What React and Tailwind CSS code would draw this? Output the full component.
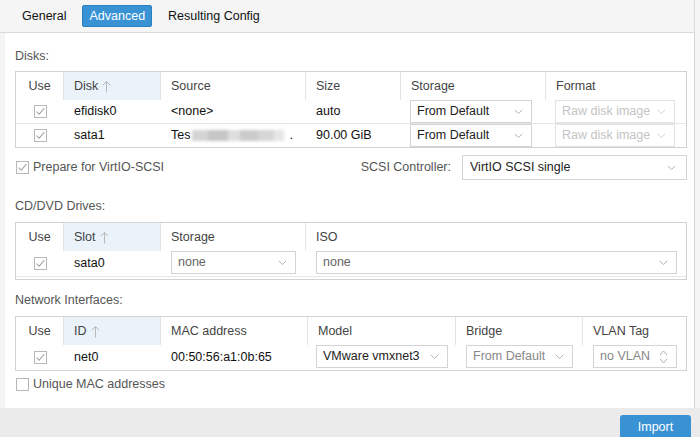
import React from "react";

const font = { fontFamily: '"Liberation Sans", Arial, sans-serif' };

function Chevron({ color = "#b0b0b0" }) {
  return (
    <svg width="9" height="6" viewBox="0 0 9 6" className="shrink-0">
      <path d="M0.8 0.8 L4.5 4.6 L8.2 0.8" fill="none" stroke={color} strokeWidth="1" />
    </svg>
  );
}

function Spinner() {
  return (
    <svg width="9" height="16" viewBox="0 0 9 16" className="shrink-0">
      <path d="M1 6 L4.5 2 L8 6" fill="none" stroke="#b0b0b0" strokeWidth="1" />
      <path d="M1 10 L4.5 14 L8 10" fill="none" stroke="#b0b0b0" strokeWidth="1" />
    </svg>
  );
}

function SortArrow() {
  return (
    <svg width="9" height="13" viewBox="0 0 9 13" className="ml-[4px] shrink-0">
      <path d="M4.5 1.5 L4.5 12.5 M0.8 5.2 L4.5 1.5 L8.2 5.2" fill="none" stroke="#b8b8b8" strokeWidth="1" />
    </svg>
  );
}

function Check({ checked = true }) {
  return (
    <svg width="13" height="13" viewBox="0 0 13 13" className="shrink-0">
      <rect x="0.5" y="0.5" width="12" height="12" fill="#fff" stroke="#b8b8b8" />
      {checked && <path d="M2.6 6.6 L5.2 9.2 L10.4 3.2" fill="none" stroke="#a8a8a8" strokeWidth="1.1" />}
    </svg>
  );
}

function Combo({ text, disabled = false, className = "", h = "h-[23px]", spinner = false, textClass = "" }) {
  return (
    <div
      className={`flex items-center justify-between bg-white border ${
        disabled ? "border-[#e2e2e2] text-[#c4c4c4]" : "border-[#d4d4d4] text-[#222]"
      } ${h} pl-[6px] pr-[8px] text-[12.5px] overflow-hidden ${className}`}
    >
      <span className={`whitespace-nowrap overflow-hidden ${textClass}`}>{text}</span>
      {spinner ? <Spinner /> : <Chevron color={disabled ? "#d4d4d4" : "#b4b4b4"} />}
    </div>
  );
}

function HeadCell({ children, sorted = false, last = false, center = false }) {
  return (
    <div
      className={`h-[28px] flex items-center text-[12.5px] text-[#444] ${
        center ? "justify-center" : "pl-[10px]"
      } ${sorted ? "bg-[#eaf2fa]" : "bg-white"} ${last ? "" : "border-r border-[#e4e4e4]"}`}
    >
      {children}
      {sorted && <SortArrow />}
    </div>
  );
}

function Cell({ children, className = "", center = false }) {
  return (
    <div className={`flex items-center text-[12.5px] text-[#111] ${center ? "justify-center" : "pl-[10px]"} ${className}`}>
      {children}
    </div>
  );
}

function Label({ children, className = "" }) {
  return <div className={`h-[16px] leading-[16px] text-[12.5px] text-[#555] ${className}`}>{children}</div>;
}

export default function App() {
  return (
    <div style={font} className="w-[700px] h-[437px] overflow-hidden bg-[#f5f5f5] flex flex-col">
      {/* Tab bar */}
      <div className="h-[33px] flex items-center border-b border-[#dadada] bg-[#f5f5f5] text-[12.5px] text-[#111] pl-[22px] shrink-0 w-[695px] border-r">
        <span>General</span>
        <span className="ml-[16px] h-[22px] px-[6px] flex items-center bg-[#3892d4] border border-[#2a7fc0] text-white rounded-[2px]">
          Advanced
        </span>
        <span className="ml-[16px]">Resulting Config</span>
      </div>

      {/* Body */}
      <div className="flex-1 flex">
        <div className="ml-[5px] w-[690px] bg-white border-r border-[#d6d6d6] pl-[10px] pr-[7px] pt-[15px] flex flex-col">
          <Label>Disks:</Label>
          <div className="mt-[7px] border border-[#d2d2d2]">
            <div className="grid grid-cols-[48px_97px_145px_95px_145px_1fr]">
              <HeadCell center>Use</HeadCell>
              <HeadCell sorted>Disk</HeadCell>
              <HeadCell>Source</HeadCell>
              <HeadCell>Size</HeadCell>
              <HeadCell>Storage</HeadCell>
              <HeadCell last>Format</HeadCell>
            </div>
            <div className="grid grid-cols-[48px_97px_145px_95px_145px_1fr] h-[24px] border-b border-[#e6e6e6]">
              <Cell center><Check /></Cell>
              <Cell>efidisk0</Cell>
              <Cell>&lt;none&gt;</Cell>
              <Cell className="pl-[8px]">auto</Cell>
              <div className="pl-[9px] pr-[14px] flex items-start"><Combo text="From Default" className="w-full" /></div>
              <div className="pl-[9px] pr-[11px] flex items-start"><Combo text="Raw disk image" disabled className="w-full" /></div>
            </div>
            <div className="grid grid-cols-[48px_97px_145px_95px_145px_1fr] h-[23px]">
              <Cell center><Check /></Cell>
              <Cell>sata1</Cell>
              <Cell>
                <span>Tes</span>
                <span className="flex items-center ml-[2px] h-[14px] blur-[1.5px]">
                  <span className="w-[16px] h-[11px] bg-[#d4d4d4]" />
                  <span className="w-[20px] h-[11px] bg-[#c6c6c6]" />
                  <span className="w-[12px] h-[11px] bg-[#dedede]" />
                  <span className="w-[18px] h-[11px] bg-[#cbcbcb]" />
                  <span className="w-[16px] h-[11px] bg-[#d6d6d6]" />
                  <span className="w-[10px] h-[11px] bg-[#e6e6e6]" />
                </span>
                <span className="ml-[5px]">.</span>
              </Cell>
              <Cell className="pl-[8px]">90.00 GiB</Cell>
              <div className="pl-[9px] pr-[14px] flex items-start"><Combo text="From Default" className="w-full" /></div>
              <div className="pl-[9px] pr-[11px] flex items-start"><Combo text="Raw disk image" disabled className="w-full" /></div>
            </div>
          </div>

          <div className="mt-[7px] h-[25px] flex items-center justify-between">
            <div className="flex items-center pl-[1px]">
              <Check />
              <span className="ml-[4px] text-[12.5px] text-[#555]">Prepare for VirtIO-SCSI</span>
            </div>
            <div className="flex items-center">
              <span className="text-[12.5px] text-[#555] mr-[11px]">SCSI Controller:</span>
              <Combo text="VirtIO SCSI single" h="h-[25px]" className="w-[225px] pl-[7px] pr-[10px]" />
            </div>
          </div>

          <Label className="mt-[18px]">CD/DVD Drives:</Label>
          <div className="mt-[8px] border border-[#d2d2d2]">
            <div className="grid grid-cols-[48px_97px_145px_1fr]">
              <HeadCell center>Use</HeadCell>
              <HeadCell sorted>Slot</HeadCell>
              <HeadCell>Storage</HeadCell>
              <HeadCell last>ISO</HeadCell>
            </div>
            <div className="grid grid-cols-[48px_97px_145px_1fr] h-[26px] border-b border-[#e6e6e6]">
              <Cell center><Check /></Cell>
              <Cell>sata0</Cell>
              <div className="pl-[10px] pr-[10px] flex items-start"><Combo text="none" className="w-full" textClass="text-[#666]" /></div>
              <div className="pl-[10px] pr-[9px] flex items-start"><Combo text="none" className="w-full" textClass="text-[#666]" /></div>
            </div>
            <div className="h-[2px]" />
          </div>

          <Label className="mt-[12px]">Network Interfaces:</Label>
          <div className="mt-[8px] border border-[#d2d2d2]">
            <div className="grid grid-cols-[48px_97px_147px_148px_127px_1fr]">
              <HeadCell center>Use</HeadCell>
              <HeadCell sorted>ID</HeadCell>
              <HeadCell>MAC address</HeadCell>
              <HeadCell>Model</HeadCell>
              <HeadCell>Bridge</HeadCell>
              <HeadCell last>VLAN Tag</HeadCell>
            </div>
            <div className="grid grid-cols-[48px_97px_147px_148px_127px_1fr] h-[25px]">
              <Cell center><Check /></Cell>
              <Cell>net0</Cell>
              <Cell>00:50:56:a1:0b:65</Cell>
              <div className="pl-[8px] pr-[8px] flex items-start"><Combo text="VMware vmxnet3" className="w-full" /></div>
              <div className="pl-[10px] pr-[10px] flex items-start"><Combo text="From Default" className="w-full" textClass="text-[#888]" /></div>
              <div className="pl-[10px] pr-[9px] flex items-start"><Combo text="no VLAN" spinner className="w-full" textClass="text-[#888]" /></div>
            </div>
          </div>

          <div className="mt-[5px] h-[16px] flex items-center pl-[1px]">
            <Check checked={false} />
            <span className="ml-[4px] text-[12.5px] text-[#555]">Unique MAC addresses</span>
          </div>
        </div>
        <div className="flex-1" />
      </div>

      {/* Footer */}
      <div className="h-[29px] shrink-0 bg-[#ebebeb] flex justify-end pr-[9px] pt-[7px]">
        <div className="w-[71px] h-[26px] bg-[#3892d4] rounded-t-[3px] text-white text-[12.5px] flex items-start justify-center pt-[3px]">
          Import
        </div>
      </div>
    </div>
  );
}
